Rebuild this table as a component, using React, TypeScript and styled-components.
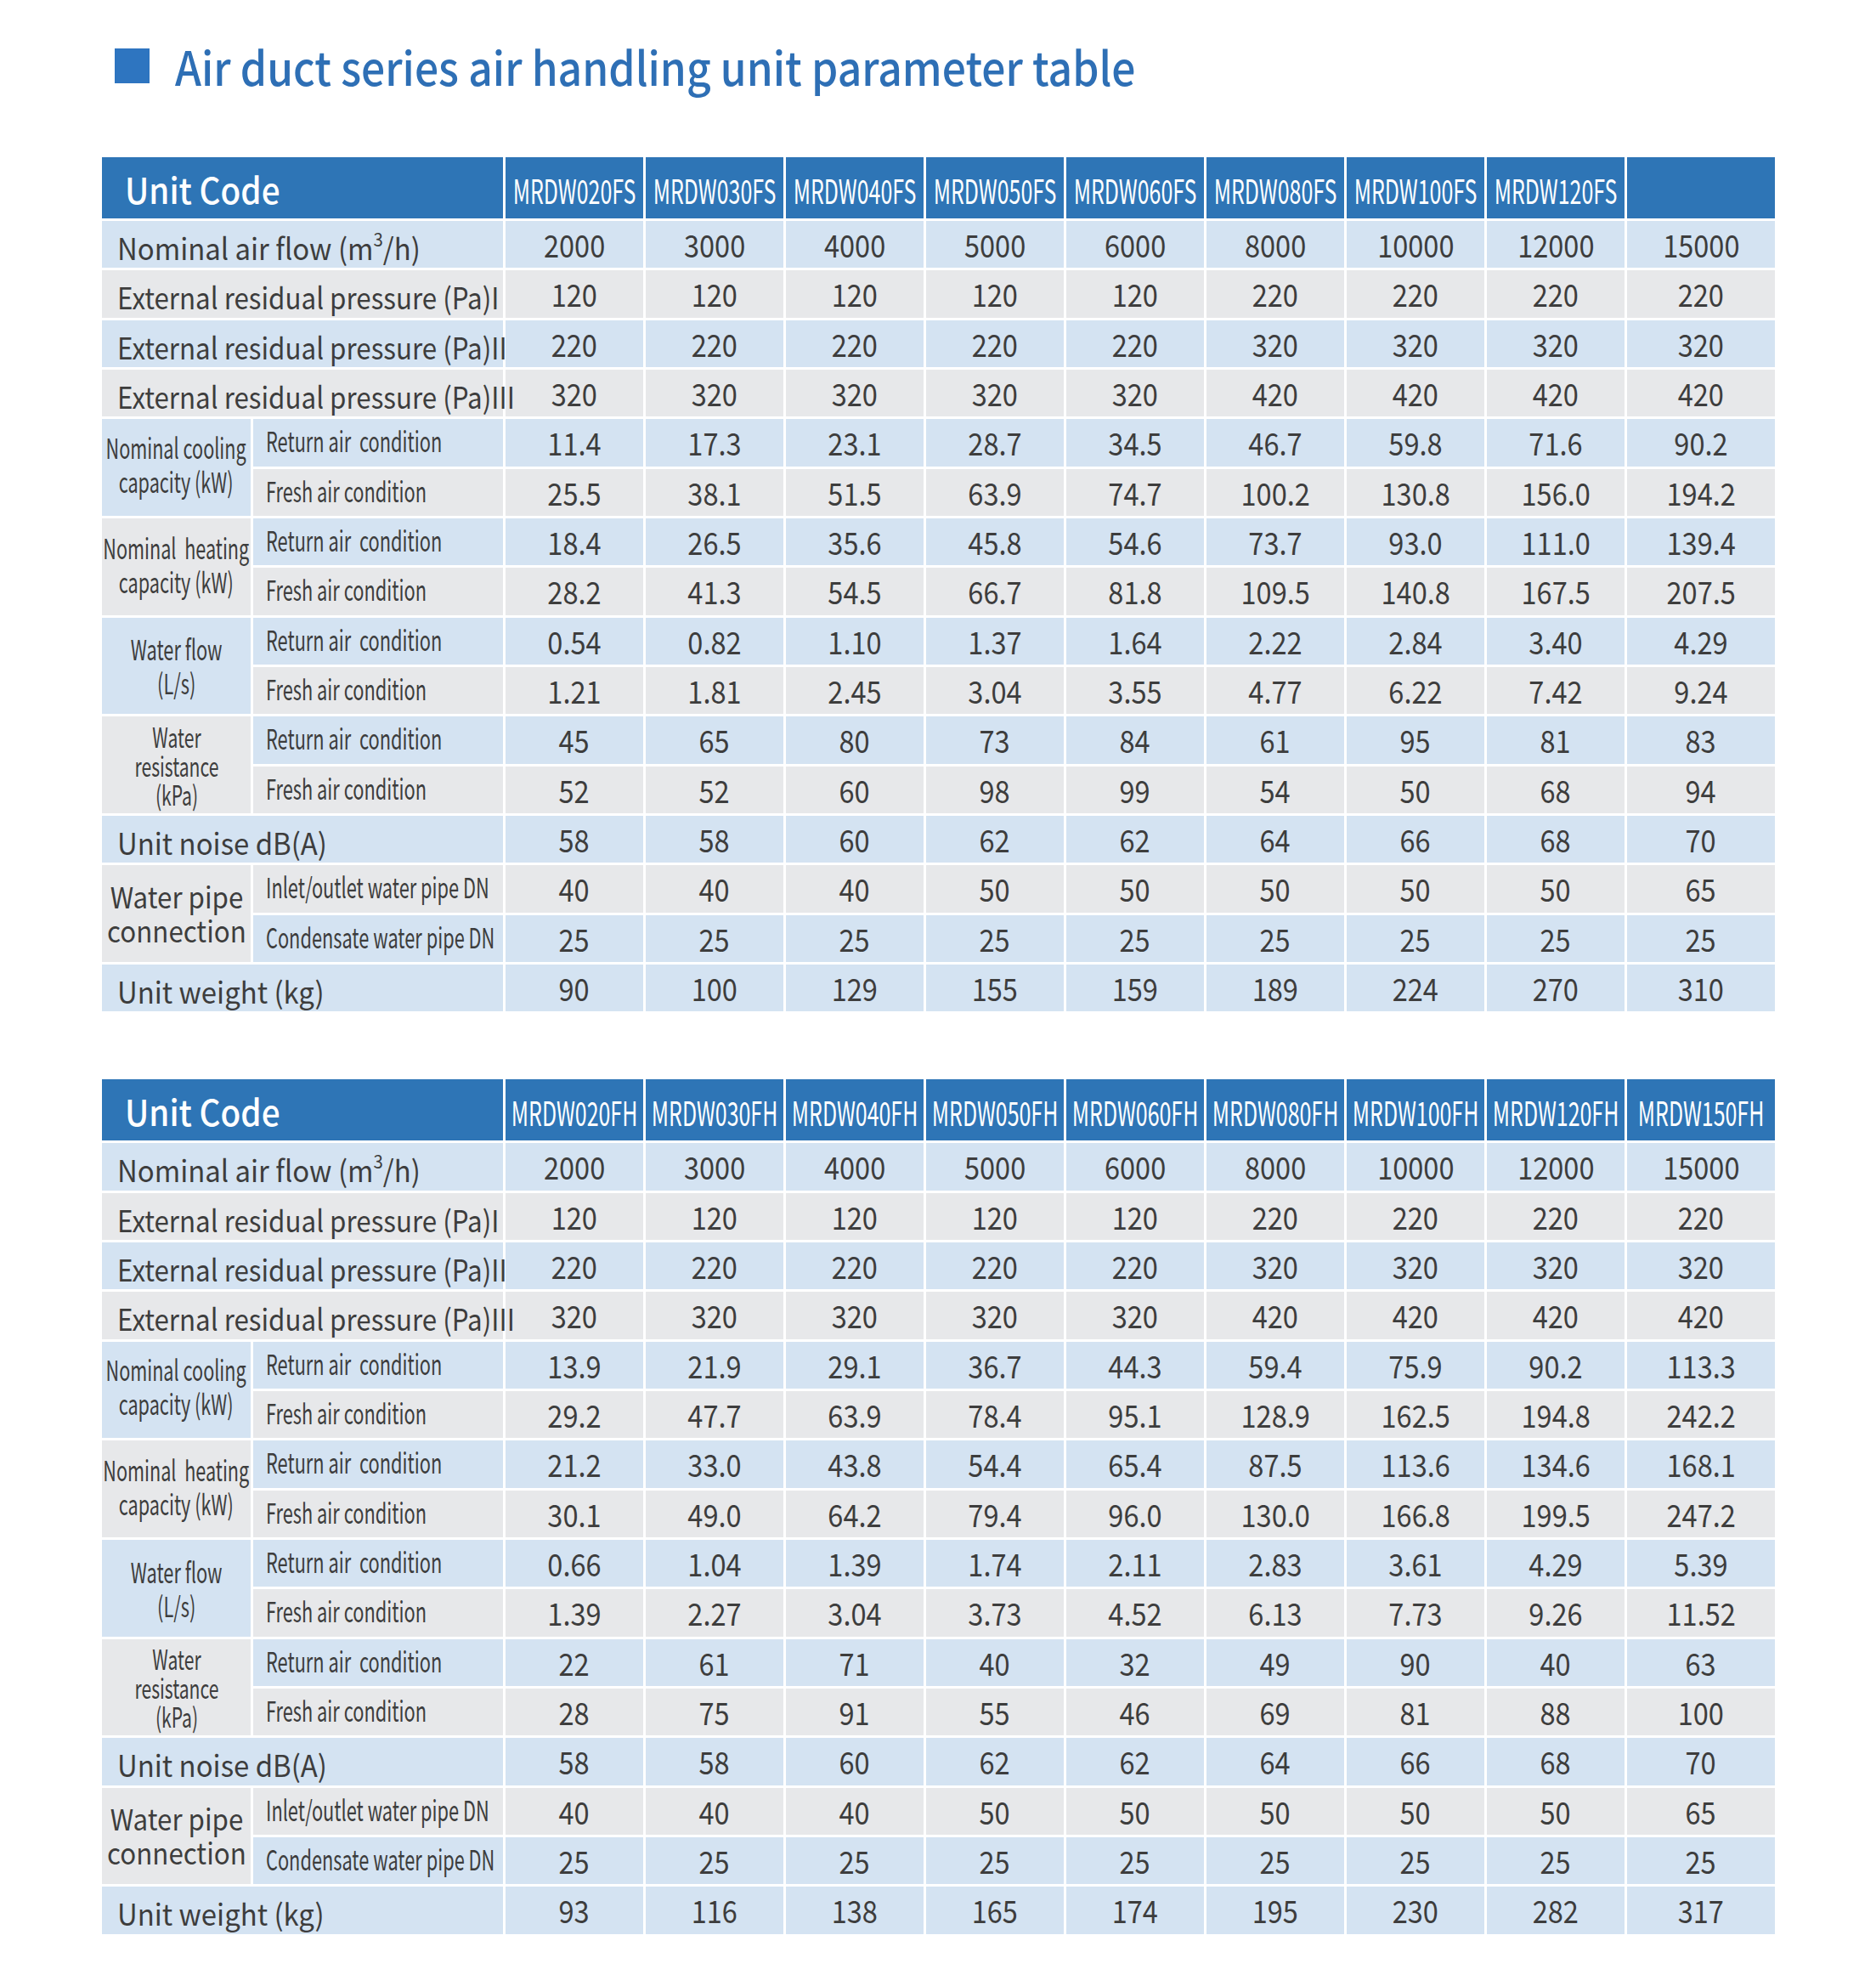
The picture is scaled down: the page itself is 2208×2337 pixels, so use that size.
import React from "react";
import styled, { createGlobalStyle } from "styled-components";

const FONT = '"Noto Sans CJK SC", "Noto Sans", sans-serif';

const GlobalStyle = createGlobalStyle`
  html, body { margin: 0; padding: 0; background: #ffffff; }
  body { font-family: ${FONT}; color: #3d3d3d; }
`;

const Page = styled.div`
  width: 2208px;
  min-height: 2337px;
  box-sizing: border-box;
  padding: 57px 0 0 120px;
  display: flex;
  flex-direction: column;
`;

const TitleRow = styled.div`
  display: flex;
  align-items: center;
  height: 41px;
  padding-left: 15px;
  gap: 30px;
`;

const TitleMark = styled.div`
  width: 41px;
  height: 41px;
  background: #2e75c0;
  flex: none;
`;

const TitleText = styled.h1`
  margin: 0;
  font-family: ${FONT};
  font-size: 55px;
  font-weight: 500;
  line-height: 41px;
  color: #2e6fb5;
  white-space: nowrap;
  transform: scaleX(0.905);
  transform-origin: left center;
`;

const Grid = styled.div<{ $top: number }>`
  margin-top: ${(p) => p.$top}px;
  width: 1970px;
  display: grid;
  grid-template-columns: 175px 294px repeat(8, 162px) 174px;
  grid-template-rows: 72px repeat(16, 55.33px);
  column-gap: 3px;
  row-gap: 3px;
`;

const HeadCell = styled.div<{ $wide?: boolean }>`
  grid-column: ${(p) => (p.$wide ? "span 2" : "auto")};
  background: #2e75b6;
  color: #ffffff;
  display: flex;
  align-items: center;
  justify-content: ${(p) => (p.$wide ? "flex-start" : "center")};
  padding-left: ${(p) => (p.$wide ? "27px" : "0")};
  overflow: visible;
  white-space: nowrap;
`;

const UnitCodeText = styled.span`
  display: inline-block;
  font-size: 42px;
  font-weight: 500;
  line-height: 1;
  transform: translateY(1px) scaleX(0.92);
  transform-origin: left center;
`;

const CodeText = styled.span`
  display: inline-block;
  font-size: 39px;
  line-height: 1;
  transform: translateY(2px) scaleX(0.64);
  transform-origin: center;
`;

type Tone = "blue" | "gray";

const toneColor = (t: Tone) => (t === "blue" ? "#d4e3f2" : "#e7e8ea");

const LabelCell = styled.div<{ $tone: Tone }>`
  grid-column: span 2;
  background: ${(p) => toneColor(p.$tone)};
  display: flex;
  align-items: center;
  padding-left: 18px;
  white-space: nowrap;
  overflow: visible;
  position: relative;
  z-index: 1;
`;

const LabelText = styled.span<{ $scale: number }>`
  display: inline-block;
  font-size: 35px;
  line-height: 1;
  transform: translateY(3px) scaleX(${(p) => p.$scale});
  transform-origin: left center;
`;

const Sup = styled.sup`
  font-size: 0.62em;
  vertical-align: 0.72em;
  line-height: 0;
`;

const GroupCell = styled.div<{ $tone: Tone }>`
  grid-row: span 2;
  background: ${(p) => toneColor(p.$tone)};
  display: flex;
  align-items: center;
  justify-content: center;
  text-align: center;
  white-space: nowrap;
`;

const GroupText = styled.div<{ $size: number; $scale: number; $lh: number; $dy: number }>`
  font-size: ${(p) => p.$size}px;
  line-height: ${(p) => p.$lh}px;
  transform: translateY(${(p) => p.$dy}px) scaleX(${(p) => p.$scale});
  transform-origin: center;
`;

const GroupLine = styled.div`
  white-space: pre;
`;

const SubCell = styled.div<{ $tone: Tone }>`
  background: ${(p) => toneColor(p.$tone)};
  display: flex;
  align-items: center;
  padding-left: 15px;
  white-space: nowrap;
  overflow: visible;
`;

const SubText = styled.span`
  display: inline-block;
  font-size: 33px;
  line-height: 1;
  white-space: pre;
  transform: translateY(-2px) scaleX(0.66);
  transform-origin: left center;
`;

const ValueCell = styled.div<{ $tone: Tone }>`
  background: ${(p) => toneColor(p.$tone)};
  display: flex;
  align-items: center;
  justify-content: center;
  white-space: nowrap;
`;

const ValueText = styled.span`
  display: inline-block;
  font-size: 37px;
  line-height: 1;
  transform: translateY(0px) scaleX(0.88);
  transform-origin: center;
`;

type SimpleRow = { kind: "simple"; label: React.ReactNode; scale: number; tone: Tone; values: string[] };
type GroupRow = {
  kind: "group";
  lines: string[];
  size: number;
  scale: number;
  lh: number;
  dy: number;
  tone: Tone;
  subs: { label: string; tone: Tone; values: string[] }[];
};
type Row = SimpleRow | GroupRow;

const sp = (s: string) => s.split(" ");

function buildRows(d: {
  cr: string; cf: string; hr: string; hf: string; wr: string; wf: string;
  rr: string; rf: string; wt: string;
}): Row[] {
  return [
    {
      kind: "simple",
      label: (
        <>
          Nominal air flow (m<Sup>3</Sup>/h)
        </>
      ),
      scale: 0.94,
      tone: "blue",
      values: sp("2000 3000 4000 5000 6000 8000 10000 12000 15000"),
    },
    { kind: "simple", label: "External residual pressure (Pa)I", scale: 0.895, tone: "gray", values: sp("120 120 120 120 120 220 220 220 220") },
    { kind: "simple", label: "External residual pressure (Pa)II", scale: 0.895, tone: "blue", values: sp("220 220 220 220 220 320 320 320 320") },
    { kind: "simple", label: "External residual pressure (Pa)III", scale: 0.895, tone: "gray", values: sp("320 320 320 320 320 420 420 420 420") },
    {
      kind: "group", lines: ["Nominal cooling", "capacity (kW)"], size: 33, scale: 0.655, lh: 40, dy: -4, tone: "blue",
      subs: [
        { label: "Return air  condition", tone: "blue", values: sp(d.cr) },
        { label: "Fresh air condition", tone: "gray", values: sp(d.cf) },
      ],
    },
    {
      kind: "group", lines: ["Nominal  heating", "capacity (kW)"], size: 33, scale: 0.655, lh: 40, dy: -3, tone: "gray",
      subs: [
        { label: "Return air  condition", tone: "blue", values: sp(d.hr) },
        { label: "Fresh air condition", tone: "gray", values: sp(d.hf) },
      ],
    },
    {
      kind: "group", lines: ["Water flow", "(L/s)"], size: 33, scale: 0.66, lh: 40, dy: 0, tone: "blue",
      subs: [
        { label: "Return air  condition", tone: "blue", values: sp(d.wr) },
        { label: "Fresh air condition", tone: "gray", values: sp(d.wf) },
      ],
    },
    {
      kind: "group", lines: ["Water", "resistance", "(kPa)"], size: 32, scale: 0.66, lh: 34, dy: 0, tone: "gray",
      subs: [
        { label: "Return air  condition", tone: "blue", values: sp(d.rr) },
        { label: "Fresh air condition", tone: "gray", values: sp(d.rf) },
      ],
    },
    { kind: "simple", label: "Unit noise dB(A)", scale: 0.94, tone: "blue", values: sp("58 58 60 62 62 64 66 68 70") },
    {
      kind: "group", lines: ["Water pipe", "connection"], size: 34, scale: 0.92, lh: 40, dy: 0, tone: "gray",
      subs: [
        { label: "Inlet/outlet water pipe DN", tone: "gray", values: sp("40 40 40 50 50 50 50 50 65") },
        { label: "Condensate water pipe DN", tone: "blue", values: sp("25 25 25 25 25 25 25 25 25") },
      ],
    },
    { kind: "simple", label: "Unit weight (kg)", scale: 0.94, tone: "blue", values: sp(d.wt) },
  ];
}

const TABLE_FS = {
  codes: ["MRDW020FS", "MRDW030FS", "MRDW040FS", "MRDW050FS", "MRDW060FS", "MRDW080FS", "MRDW100FS", "MRDW120FS", ""],
  rows: buildRows({
    cr: "11.4 17.3 23.1 28.7 34.5 46.7 59.8 71.6 90.2",
    cf: "25.5 38.1 51.5 63.9 74.7 100.2 130.8 156.0 194.2",
    hr: "18.4 26.5 35.6 45.8 54.6 73.7 93.0 111.0 139.4",
    hf: "28.2 41.3 54.5 66.7 81.8 109.5 140.8 167.5 207.5",
    wr: "0.54 0.82 1.10 1.37 1.64 2.22 2.84 3.40 4.29",
    wf: "1.21 1.81 2.45 3.04 3.55 4.77 6.22 7.42 9.24",
    rr: "45 65 80 73 84 61 95 81 83",
    rf: "52 52 60 98 99 54 50 68 94",
    wt: "90 100 129 155 159 189 224 270 310",
  }),
};

const TABLE_FH = {
  codes: ["MRDW020FH", "MRDW030FH", "MRDW040FH", "MRDW050FH", "MRDW060FH", "MRDW080FH", "MRDW100FH", "MRDW120FH", "MRDW150FH"],
  rows: buildRows({
    cr: "13.9 21.9 29.1 36.7 44.3 59.4 75.9 90.2 113.3",
    cf: "29.2 47.7 63.9 78.4 95.1 128.9 162.5 194.8 242.2",
    hr: "21.2 33.0 43.8 54.4 65.4 87.5 113.6 134.6 168.1",
    hf: "30.1 49.0 64.2 79.4 96.0 130.0 166.8 199.5 247.2",
    wr: "0.66 1.04 1.39 1.74 2.11 2.83 3.61 4.29 5.39",
    wf: "1.39 2.27 3.04 3.73 4.52 6.13 7.73 9.26 11.52",
    rr: "22 61 71 40 32 49 90 40 63",
    rf: "28 75 91 55 46 69 81 88 100",
    wt: "93 116 138 165 174 195 230 282 317",
  }),
};

function ParamTable({ codes, rows, top }: { codes: string[]; rows: Row[]; top: number }) {
  const cells: React.ReactNode[] = [];
  cells.push(
    <HeadCell key="h" $wide>
      <UnitCodeText>Unit Code</UnitCodeText>
    </HeadCell>
  );
  codes.forEach((c, i) =>
    cells.push(
      <HeadCell key={`c${i}`}>
        <CodeText>{c}</CodeText>
      </HeadCell>
    )
  );
  const pushValues = (key: string, tone: Tone, values: string[]) =>
    values.forEach((v, vi) =>
      cells.push(
        <ValueCell key={`${key}-${vi}`} $tone={tone}>
          <ValueText>{v}</ValueText>
        </ValueCell>
      )
    );
  rows.forEach((r, ri) => {
    if (r.kind === "simple") {
      cells.push(
        <LabelCell key={`l${ri}`} $tone={r.tone}>
          <LabelText $scale={r.scale}>{r.label}</LabelText>
        </LabelCell>
      );
      pushValues(`v${ri}`, r.tone, r.values);
    } else {
      cells.push(
        <GroupCell key={`g${ri}`} $tone={r.tone}>
          <GroupText $size={r.size} $scale={r.scale} $lh={r.lh} $dy={r.dy}>
            {r.lines.map((l, li) => (
              <GroupLine key={li}>{l}</GroupLine>
            ))}
          </GroupText>
        </GroupCell>
      );
      r.subs.forEach((s, si) => {
        cells.push(
          <SubCell key={`s${ri}-${si}`} $tone={s.tone}>
            <SubText>{s.label}</SubText>
          </SubCell>
        );
        pushValues(`v${ri}-${si}`, s.tone, s.values);
      });
    }
  });
  return <Grid $top={top}>{cells}</Grid>;
}

export default function App() {
  return (
    <>
      <GlobalStyle />
      <Page>
        <TitleRow>
          <TitleMark />
          <TitleText>Air duct series air handling unit parameter table</TitleText>
        </TitleRow>
        <ParamTable codes={TABLE_FS.codes} rows={TABLE_FS.rows} top={87} />
        <ParamTable codes={TABLE_FH.codes} rows={TABLE_FH.rows} top={80} />
      </Page>
    </>
  );
}
